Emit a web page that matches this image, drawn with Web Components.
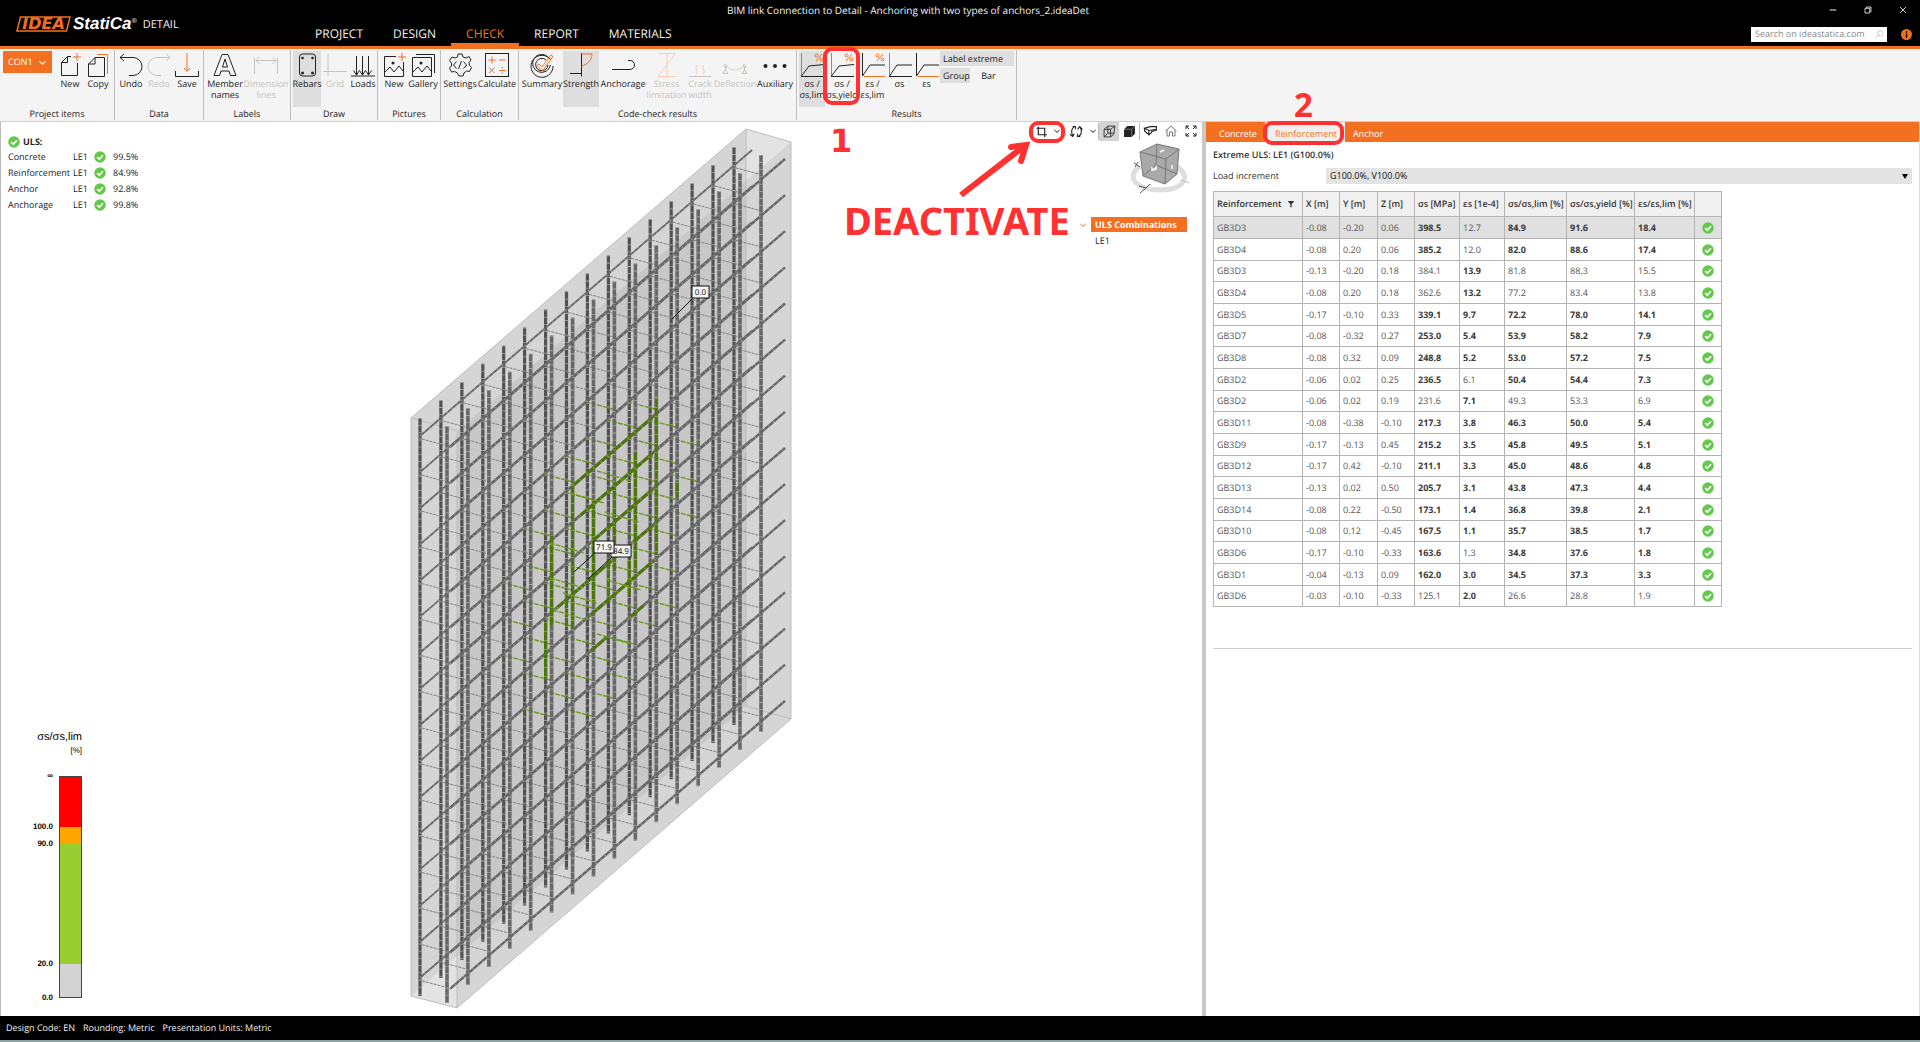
<!DOCTYPE html>
<html lang="en">
<head>
<meta charset="utf-8">
<title>IDEA StatiCa Detail</title>
<style>
  html, body { height: 100%; }
  body {
    margin: 0; position: relative; overflow: hidden;
    display: flex; flex-direction: column;
    font: 9px/12px "Open Sans", "Noto Sans", sans-serif;
    text-rendering: geometricPrecision;
    color: #222; background: #fff;
    --accent: #f37021; --mark: #ff3131;
  }
</style>
</head>
<body>
<app-header></app-header>
<ribbon-bar></ribbon-bar>
<work-space>
  <model-view slot="model"></model-view>
  <results-panel slot="results"></results-panel>
</work-space>
<status-bar></status-bar>
<callout-layer></callout-layer>

<script>
const ICONS = {
  newdoc: '<path d="M13 3.5H9.500L3.500 9.500V22.500H19.500V10"/><path d="M9.500 3.500V9.500H3.500"/><path class="o" d="M19 0v8M15 4h8"/>',
  copy: '<path d="M9 4.500H18.500V23.500H2.500V11z"/><path d="M9 4.500V11H2.500"/><path class="o" d="M11 1.500H21.500V21"/>',
  undo: '<path d="M1 4.500H14a9 9 0 0 1 0 18H10M5 1L1 4.500L5 8"/>',
  redo: '<path d="M23 4.500H10a9 9 0 0 0 0 18H14M19 1L23 4.500L19 8"/>',
  save: '<path d="M.5 18v5.500H23.500V18"/><path class="o" d="M12 0v18M9 15l3 3.500l3-3.500"/>',
  names: '<path d="M9 1.500H15L23 22.500H17.500L16 18H8L6.500 22.500H1z M12 6L9.500 14H14.500z"/>',
  dims: '<path d="M.5 5v16M23.500 5v16M2 7.500H22M5.500 4L2 7.500L5.500 11M18.500 4L22 7.500L18.500 11"/>',
  rebars: '<rect x="4.500" y="1" width="16" height="22" rx="3"/><g class="f"><circle cx="7.500" cy="5" r="1.300"/><circle cx="17.500" cy="5" r="1.300"/><circle cx="7.500" cy="20" r="1.500"/><circle cx="17.500" cy="20" r="1.500"/></g>',
  grid: '<path d="M5 1v22M0 18.500H24"/>',
  loads: '<path d="M0 23H24M5.500 3v19M11.500 3v19M17.500 3v19M2.500 17.500l3 4.500l3-4.500l3 4.500l3-4.500l3 4.500l3-4.500"/>',
  picture: '<path d="M14 3.500H2.500V23.500H21.500V9"/><path d="M3 19l5-5l4 5l5-6l4 5"/><circle class="f" cx="11" cy="10" r="1.500"/><path class="o" d="M20 0v8M16 4h8"/>',
  gallery: '<path d="M5 1.500H23.500V20"/><path d="M1.500 4.500H20.500V23.500H1.500z M2 19l5-5l4 5l5-6l4 5"/><circle class="f" cx="10" cy="10" r="1.500"/>',
  settings: '<path d="M10 1h4l1 3l3 1l3-1.500l2 3.500l-2 2.500l.5 3l2 2l-2 4l-3-.5l-2.500 2l-1 3h-4l-1.500-3l-3-1.500l-3 .5l-2-4l2-2l0-3l-2-2.500l2.500-3.500l3 1l2.500-1z"/><path d="M8.500 8.500L5.500 12l3 3.500M15.500 8.500l3 3.500l-3 3.500M13.500 8l-3 8"/>',
  calculate: '<rect x=".5" y=".5" width="23" height="23"/><path class="o" d="M3.500 7h7M7 3.500v7M14 7h6.500M4 14.500l5.500 5.500M9.500 14.500L4 20M14 17.500h6.500M17.200 14v1.500M17.200 19.500v1.500"/>',
  summary: '<path d="M21 7a11 11 0 1 0 2 6M18 4a9 9 0 1 0 2.500 8M16 7a6.200 6.200 0 1 0 2 5"/><path class="o" d="M7 12.500l2-1.500l3 3l9-12l2 1.500L12.500 18z"/>',
  strength: '<path d="M12.500 0V23.500M1 20.500H12.500"/><path class="o" d="M12.500 1H23C23 7 18 12 12.500 13"/>',
  anchorage: '<path d="M1 16.500H19a4.500 4.500 0 0 0 0-9H17"/>',
  stress: '<path class="o" d="M3 .500H20.500L3 23.500H20.500M12 0V24"/>',
  crack: '<path d="M1 23.500H23"/><path class="o" d="M9 12c-3 3 2 5-1 10M16 12c-3 3 2 5-1 10"/>',
  deflection: '<path d="M2.500 13v4L0 20.500H5L2.500 17M21.500 13v4L19 20.500H24L21.500 17"/><circle cx="2.500" cy="13" r="1.500"/><circle cx="21.500" cy="13" r="1.500"/><path class="o" d="M4 14q8 6 16 0"/>',
  dots: '<g class="f"><circle cx="2.500" cy="13" r="2"/><circle cx="12" cy="13" r="2"/><circle cx="21.500" cy="13" r="2"/></g>',
  sigpct: '<path class="o" d="M1.500 0V23"/><path d="M1 23.500H24M1.500 23L9 13L24 11.500"/><path class="o" d="M22 1l-6 7"/><circle class="o" cx="16.500" cy="2.500" r="1.500"/><circle class="o" cx="21.500" cy="6.500" r="1.500"/>',
  epspct: '<path d="M1.500 0V23M1.500 23L9 12H24"/><path class="o" d="M3 23.500H24M22 1l-6 7"/><circle class="o" cx="16.500" cy="2.500" r="1.500"/><circle class="o" cx="21.500" cy="6.500" r="1.500"/>',
  sigma: '<path class="o" d="M1.500 0V23"/><path d="M1 23.500H24M1.500 23L9 12H24"/>',
  epsilon: '<path d="M1.500 0V23M1.500 23L9 12H24"/><path class="o" d="M3 23.500H24"/>',
  chevron: '<path d="M4 9l8 7l8-7" stroke-width="3"/>',
  check: '<circle cx="12" cy="12" r="11.500" fill="#62c94a" stroke="none"/><path d="M6.500 12l4 4.500l7.500-8" stroke="#fff" stroke-width="3.600"/>',
  search: '<circle cx="14" cy="9" r="7"/><path d="M9 14L2 22"/>',
  info: '<circle cx="12" cy="12" r="12" fill="#f37021" stroke="none"/><path d="M12 10v9M12 5v3" stroke="#000" stroke-width="3"/>',
  minimize: '<path d="M2 12H22" stroke-width="3"/>',
  restore: '<path d="M3 7H17V21H3zM7 6V3H21V17H18" stroke-width="2.500"/>',
  close: '<path d="M3 3L21 21M21 3L3 21" stroke-width="2.500"/>',
  crop: '<path d="M1 5H19V24M5 1V19H24" stroke-width="2.500"/>',
  rotate: '<path d="M8 3C2 6 2 14 5 20M0 17l5 4l3-5M5 3h5v5M16 21c6-3 6-11 3-17M14 8l4-5l5 5M14 16v5h5" stroke-width="2"/>',
  wirecube: '<path d="M2 8L9 2H22L20 17L14 22H2zM2 8H14V22M14 8L22 2M9 2V15H20M9 15L2 22" stroke-width="1.500"/>',
  solidcube: '<path class="f" d="M2 8L8 2H22V16L16 22H2z"/><path d="M2 8H16V22M16 8L22 2" stroke="#aaa" stroke-width="1"/>',
  beam: '<path d="M1 6L9 10L23 8V3L12 3zM1 6V11L9 18V10M9 18L14 14V12L23 10V8" stroke-width="2"/>',
  home: '<path d="M1 12L12 2L23 12M4 10V22H9V14H15V22H20V10" stroke="#777" stroke-width="2"/>',
  expand: '<path d="M2 8V2H8M2 2L8 8M16 2H22V8M22 2L16 8M2 16V22H8M2 22L8 16M22 16V22H16M22 22L16 16" stroke-width="2"/>',
  filter: '<path class="f" d="M2 3H22L14 13V22H10V13z"/>'
};

class Base extends HTMLElement {
  connectedCallback() {
    if (this.shadowRoot) return;
    this.attachShadow({ mode: 'open' }).innerHTML = this.view();
  }
}

customElements.define('app-icon', class extends Base {
  view() {
    const s = this.getAttribute('size') || 24;
    return `<style>:host{display:inline-flex;flex:none}svg{display:block;overflow:visible;fill:none;stroke:currentColor;stroke-width:1}
      .o{stroke:var(--accent)}.f{fill:currentColor;stroke:none}</style>
      <svg width="${s}" height="${s}" viewBox="0 0 24 24" aria-hidden="true">${ICONS[this.getAttribute('name')]}</svg>`;
  }
});

customElements.define('app-header', class extends Base {
  view() {
    const tabs = ['PROJECT', 'DESIGN', 'CHECK', 'REPORT', 'MATERIALS'];
    return `<style>
      :host{display:grid;grid-template-columns:300px 1fr auto;grid-template-rows:20px 26px;background:#000;color:#f2f2f2;border-bottom:3px solid var(--accent)}
      .brand{grid-column:1;grid-row:1/3;display:flex;align-items:center;padding:1px 0 0 16px}
      .mark{position:relative;display:flex;width:55px;height:16px;align-items:center;justify-content:center;color:var(--accent);font:italic bold 16px/16px "DejaVu Sans",sans-serif}
      .mark svg{position:absolute;left:0;top:0;overflow:visible}
      .name{font:italic bold 17px/18px "Liberation Sans",sans-serif;color:#fff;padding-left:2px}
      sup{font-size:7px;line-height:7px;vertical-align:6px;font-weight:normal}
      .prod{font-size:11px;padding:3px 0 0 6px}
      .title{grid-column:1/4;grid-row:1;text-align:center;align-self:center;padding:0 104px 0 0;font-size:10px}
      .brand,.win{z-index:1}
      nav{grid-column:2;grid-row:2;display:flex}
      nav a{color:inherit;text-decoration:none;font-size:12px;line-height:28px;height:26px;padding:0 15px}
      nav a.on{color:var(--accent);box-shadow:inset 0 -3px var(--accent)}
      .win{grid-column:3;grid-row:1;display:flex;gap:24px;align-items:center;justify-content:flex-end;padding-right:12px}
      button{all:unset;display:flex;width:11px;justify-content:center}
      .tools{grid-column:3;grid-row:2;display:flex;align-items:center;gap:14px;padding:2px 8px 0 0}
      .search{display:flex;align-items:center;background:#fff;color:#777;width:136px;height:15px;padding:0 3px 0 4px;box-sizing:border-box}
      input{all:unset;flex:1;min-width:0;font-size:9px;line-height:14px}
      input::-webkit-search-cancel-button,input::-webkit-search-decoration{display:none}
      input::placeholder{color:#888;opacity:1}
    </style>
    <div class="brand"><span class="mark"><svg width="55" height="16" viewBox="0 0 55 16"><path d="M4.500 1H54L50.500 15H1z" fill="none" stroke="#f37021" stroke-width="1.500"/></svg>IDEA</span>
      <span class="name">StatiCa<sup>®</sup></span><span class="prod">DETAIL</span></div>
    <div class="title">BIM link Connection to Detail - Anchoring with two types of anchors_2.ideaDet</div>
    <nav>${tabs.map(t => `<a href="#"${t === 'CHECK' ? ' class="on"' : ''}>${t}</a>`).join('')}</nav>
    <div class="win">${['minimize', 'restore', 'close'].map(n => `<button aria-label="${n}"><app-icon name="${n}" size="8"></app-icon></button>`).join('')}</div>
    <div class="tools"><label class="search"><input type="text" aria-label="Search" placeholder="Search on ideastatica.com"><app-icon name="search" size="9"></app-icon></label>
      <button aria-label="About"><app-icon name="info" size="11"></app-icon></button></div>`;
  }
});

customElements.define('ribbon-group', class extends Base {
  view() {
    return `<style>
      :host{display:flex;flex-direction:column;box-sizing:border-box;flex:none;border-right:1px solid #bdbdbd;margin:1px 0}
      .row{display:flex;flex:1;padding:1px 2px 0}
      .cap{text-align:center;line-height:12px}
    </style><div class="row"><slot></slot></div><div class="cap">${this.getAttribute('caption')}</div>`;
  }
});

customElements.define('ribbon-button', class extends Base {
  view() {
    const off = this.hasAttribute('off');
    return `<style>
      :host{display:block;flex:none}
      button{all:unset;box-sizing:border-box;width:100%;height:56px;display:flex;flex-direction:column;align-items:center;gap:1px;padding-top:2px;
        white-space:nowrap;text-align:center;line-height:11px;${off ? 'color:#c4c4c4;--accent:#f8cdb2;' : ''}${this.hasAttribute('on') ? 'background:#dedede;' : ''}}
    </style><button${off ? ' aria-disabled="true"' : ''}><app-icon name="${this.getAttribute('icon')}" size="24"></app-icon><span><slot></slot></span></button>`;
  }
});

customElements.define('ribbon-bar', class extends Base {
  view() {
    const groups = [
      ['Project items', 115, [['newdoc', 28, 'New'], ['copy', 28, 'Copy']]],
      ['Data', 89, [['undo', 28, 'Undo'], ['redo', 28, 'Redo', 'off'], ['save', 28, 'Save']]],
      ['Labels', 87, [['names', 38, 'Member<br>names'], ['dims', 44, 'Dimension<br>lines', 'off']]],
      ['Draw', 87, [['rebars', 28, 'Rebars', 'on'], ['grid', 28, 'Grid', 'off'], ['loads', 28, 'Loads']]],
      ['Pictures', 63, [['picture', 28, 'New'], ['gallery', 30, 'Gallery']]],
      ['Calculation', 78, [['settings', 34, 'Settings'], ['calculate', 40, 'Calculate']]],
      ['Code-check results', 278, [['summary', 42, 'Summary'], ['strength', 36, 'Strength', 'on'], ['anchorage', 48, 'Anchorage'], ['stress', 39, 'Stress<br>limitation', 'off'],
        ['crack', 28, 'Crack<br>width', 'off'], ['deflection', 42, 'Deflection', 'off'], ['dots', 38, 'Auxiliary']]],
      ['Results', 220, [['sigpct', 26, 'σs /<br>σs,lim', 'on'], ['sigpct', 34, 'σs /<br>σs,yield'], ['epspct', 27, 'εs /<br>εs,lim'], ['sigma', 27, 'σs'], ['epsilon', 27, 'εs']]]
    ];
    const btn = ([i, w, t, s]) => `<ribbon-button icon="${i}" style="width:${w}px"${s ? ' ' + s : ''}>${t}</ribbon-button>`;
    return `<style>
      :host{display:flex;height:72px;background:#f4f4f4;border-bottom:1px solid #cfcfcf}
      .con{all:unset;box-sizing:border-box;display:flex;align-items:center;justify-content:space-between;width:50px;height:22px;margin:0 4px 0 1px;padding:0 5px;background:var(--accent);color:#fff}
      .opts{display:grid;grid-template-columns:30px 1fr;gap:2px 0;align-content:start;flex:1}
      .opts button{all:unset;line-height:15px;padding:0 3px}
      .opts .wide{grid-column:1/3}.opts .on{background:#dedede}.opts .bar{text-align:center;padding-right:10px}
    </style>${groups.map(([c, w, b]) => `<ribbon-group caption="${c}" style="width:${w}px">${c === 'Project items' ? '<button class="con">CON1<app-icon name="chevron" size="9"></app-icon></button>' : ''}${b.map(btn).join('')}${c === 'Results' ? '<div class="opts"><button class="wide on">Label extreme</button><button class="on">Group</button><button class="bar">Bar</button></div>' : ''}</ribbon-group>`).join('')}`;
  }
});

customElements.define('work-space', class extends Base {
  view() {
    return `<style>:host{display:grid;grid-template-columns:1202fr 4px 714fr;flex:1;min-height:0}
      .split{background:#c9c9c9}</style><slot name="model"></slot><div class="split"></div><slot name="results"></slot>`;
  }
});

customElements.define('check-summary', class extends Base {
  view() {
    const rows = [['Concrete', '99.5%'], ['Reinforcement', '84.9%'], ['Anchor', '92.8%'], ['Anchorage', '99.8%']];
    return `<style>:host{display:block;position:absolute;left:7px;top:12px}
      .t{display:flex;align-items:center;gap:3px;font-weight:bold;line-height:15px}
      dl{display:grid;grid-template-columns:65px 21px 19px auto;align-items:center;margin:0;line-height:16px}dd{margin:0}dd app-icon{display:flex}</style>
      <div class="t"><app-icon name="check" size="12"></app-icon>ULS:</div>
      <dl>${rows.map(r => `<dt>${r[0]}</dt><dd>LE1</dd><dd><app-icon name="check" size="12"></app-icon></dd><dd>${r[1]}</dd>`).join('')}</dl>`;
  }
});

customElements.define('color-legend', class extends Base {
  view() {
    const seg = [['∞', '#f00', 51], ['100.0', '#ffa500', 17], ['90.0', '#9acd32', 120], ['20.0', '#d3d3d3', 34]];
    return `<style>:host{display:block;position:absolute;left:23px;bottom:18px;width:58px;font:8px/8px "Liberation Sans",sans-serif;color:#000;text-align:right}
      h4{margin:0;font-weight:normal;font-size:11px;line-height:14px;white-space:nowrap}
      .u{margin:3px 0 21px}
      .s{display:flex;justify-content:space-between}.s b,.end b{width:29px;margin-top:-4px}
      .s i{width:21px;border:solid #444;border-width:0 1px}
      .s:nth-of-type(2) i{border-top-width:1px}.s.last i{border-bottom-width:1px}
      .end{display:flex;height:0}</style>
      <h4>σs/σs,lim</h4><div class="u">[%]</div>
      ${seg.map(([l, c, h], n) => `<div class="s${n === 3 ? ' last' : ''}" style="height:${h}px"><b>${l}</b><i style="background:${c}"></i></div>`).join('')}
      <div class="end"><b>0.0</b></div>`;
  }
});

function drawModel() {
  const out = [], ln = (x1, y1, x2, y2, c) => out.push(`<path class="${c}" d="M${x1.toFixed(1)} ${y1.toFixed(1)}L${x2.toFixed(1)} ${y2.toFixed(1)}"/>`);
  const bar = (x1, y1, x2, y2, k) => { ln(x1, y1, x2, y2, k); ln(x1, y1, x2, y2, k[0] + 't'); };
  const dx = 20.93, dy = 18.07, row = 36.12;
  out.push('<path d="M411 418L746 129L791 142V719L457 1008L411 996z" fill="#e3e3e3"/>');
  out.push('<path class="face" d="M411 418L746 129V706L411 996z"/><path class="face" d="M457 431L791 142V719L457 1008z"/>');
  out.push('<path class="edge" d="M411 418L746 129L791 142V719L457 1008L411 996zM411 418L457 431M746 129V706L791 719M457 431V1008"/>');
  for (let i = 0; i < 16; i++) bar(420 + dx * i, 418 - dy * i, 420 + dx * i, 996 - dy * i, 'vb');
  for (let k = 0; k < 16; k++) bar(420, 436 + row * k, 752, 150 + row * k, 'db');
  for (let i = 0; i < 16; i++) for (let k = 0; k < 16; k++) {
    const x = 418 + dx * i, y = 438 + row * k - dy * i, u = (x + 14 - 600) / 92, v = (y + 4 + .866 * (x + 14) - 1075) / 152;
    ln(x, y, x + 30, y + 8, u * u + v * v < 1 ? 'tg' : 'tb');
  }
  for (let i = 0; i < 16; i++) bar(447 + dx * i, 426 - dy * i, 447 + dx * i, 1003 - dy * i, 'vf');
  for (let k = 0; k < 16; k++) bar(450, 447 + row * k, 785, 159 + row * k, 'df');
  [[10, 398, 555], [9, 451, 570], [8, 481, 572], [7, 500, 603], [6, 485, 630], [5, 535, 625], [11, 482, 497]].forEach(([i, a, b]) => bar(447 + dx * i, a, 447 + dx * i, b, 'gv'));
  [[6, 622, 680], [7, 590, 627], [9, 560, 600], [10, 560, 595]].forEach(([i, a, b]) => bar(420 + dx * i, a, 420 + dx * i, b, 'gv'));
  [[4, 573, 652], [5, 580, 652], [6, 593, 652], [7, 557, 613], [7, 633, 653], [8, 590, 653], [9, 590, 607], [9, 630, 643]].forEach(([k, a, b]) =>
    bar(a, 447 + row * k - (a - 450) * .86, b, 447 + row * k - (b - 450) * .86, 'gv'));
  [[597, 471], [570, 493], [605, 512], [550, 543], [550, 578], [563, 593], [607, 580], [553, 610], [597, 634]].forEach(([x, y]) => ln(x, y, x + 34, y + 10, 'tg'));
  out.push('<path d="M692 299L672 319M596 552L574 572M612 557L588 579" stroke="#111" stroke-width="1"/>');
  [[692, 286, 17, '0.0'], [611, 545, 20, '84.9'], [594, 541, 20, '71.9']].forEach(([x, y, w, t]) =>
    out.push(`<rect x="${x}" y="${y}" width="${w}" height="12" fill="#f6f6f6" stroke="#111"/><text x="${x + w / 2}" y="${y + 9}">${t}</text>`));
  return out.join('');
}

customElements.define('orientation-cube', class extends Base {
  view() {
    return `<style>:host{display:block;position:absolute;right:12px;top:20px}svg{display:block}</style>
    <svg width="60" height="52" viewBox="0 0 60 52" fill="none" stroke="#777" stroke-width="1" role="img" aria-label="View orientation">
      <path d="M10 24C-6 36 8 48 30 48C54 48 62 34 47 25" stroke="#dedede" stroke-width="5"/>
      <path d="M10 10L27 2L49 7L47 32L35 42L13 34z" fill="#a9a9a9"/><path d="M10 10L36 17L49 7M36 17L35 42M27 2L26 23L13 34M26 23L47 32"/>
      <path d="M30 10l4-2M22 29v-3l2 2l2-3v3M42 23v4" stroke="#f4f4f4" stroke-width="1.500"/>
      <path d="M4 21l6 4M8 20l-3 5M9 44l7 2l4-4M16 46l-6 5" stroke="#555"/><path d="M51 38l8 3" stroke="#bbb"/></svg>`;
  }
});

customElements.define('view-toolbar', class extends Base {
  view() {
    const b = (n, s, w, c = '') => `<button class="${c}" aria-label="${n}" style="width:${w}px"><app-icon name="${n}" size="${s}"></app-icon></button>`;
    return `<style>:host{display:flex;align-items:center;position:absolute;right:1px;top:-1px;height:20px;color:#222}
      button{all:unset;display:flex;align-items:center;justify-content:center;height:20px}.on{background:#d4d4d4}
      i{width:1px;height:17px;background:#bbb}</style>
      ${b('crop', 11, 18)}${b('chevron', 8, 14)}${b('rotate', 13, 24)}${b('chevron', 8, 10)}<i></i>${b('wirecube', 13, 20, 'on')}${b('solidcube', 13, 20)}<i></i>${b('beam', 13, 21)}${b('home', 12, 20)}${b('expand', 12, 20)}`;
  }
});

customElements.define('combination-tree', class extends Base {
  view() {
    return `<style>:host{display:grid;grid-template-columns:12px 96px;align-items:center;position:absolute;right:15px;top:95px}
      .h{background:var(--accent);color:#fff;font-weight:bold;line-height:15px;padding-left:4px}.l{grid-column:2;padding-left:4px;line-height:18px}
      app-icon{color:var(--accent)}</style>
      <app-icon name="chevron" size="8"></app-icon><div class="h">ULS Combinations</div><div class="l">LE1</div>`;
  }
});

customElements.define('model-view', class extends Base {
  view() {
    return `<style>:host{display:block;position:relative;border-left:1px solid #bbb;box-sizing:border-box;background:#fff;min-width:0;min-height:0}
      .scene{position:absolute;inset:0;width:100%;height:100%;fill:none}
      .face{fill:#000;fill-opacity:.06}.edge{stroke:#bdbdbd;stroke-width:1}
      .vb{stroke:#525252;stroke-width:3.200}.vf{stroke:#686868;stroke-width:3.600}
      .db{stroke:#686868;stroke-width:1.800}.df{stroke:#666;stroke-width:2.400}
      .vt{stroke:#a8a8a8;stroke-width:3.600;stroke-dasharray:.8 6.400}.dt{stroke:#a0a0a0;stroke-width:1.600;stroke-dasharray:1 5}
      .tb{stroke:#808080;stroke-width:1;stroke-dasharray:3 1}.tg{stroke:#6d9a1c;stroke-width:1.400;stroke-dasharray:5 1}
      .gv{stroke:#4d7411;stroke-width:3}.gt{stroke:#79a52e;stroke-width:3;stroke-dasharray:1 8}
      text{font:8px "Noto Sans",sans-serif;fill:#111;text-anchor:middle}</style>
      <svg class="scene" viewBox="1 122 1201 894" preserveAspectRatio="xMinYMin meet" role="img" aria-label="Reinforcement model">${drawModel()}</svg>
      <check-summary></check-summary><color-legend></color-legend><view-toolbar></view-toolbar><orientation-cube></orientation-cube><combination-tree></combination-tree>`;
  }
});

customElements.define('results-panel', class extends Base {
  view() {
    const head = ['Reinforcement', 'X [m]', 'Y [m]', 'Z [m]', 'σs [MPa]', 'εs [1e-4]', 'σs/σs,lim [%]', 'σs/σs,yield [%]', 'εs/εs,lim [%]', ''];
    const cols = [89, 37, 38, 37, 45, 45, 62, 68, 60, 27];
    const data = `GB3D3 -0.08 -0.20 0.06 *398.5 12.7 *84.9 *91.6 *18.4
GB3D4 -0.08 0.20 0.06 *385.2 12.0 *82.0 *88.6 *17.4
GB3D3 -0.13 -0.20 0.18 384.1 *13.9 81.8 88.3 15.5
GB3D4 -0.08 0.20 0.18 362.6 *13.2 77.2 83.4 13.8
GB3D5 -0.17 -0.10 0.33 *339.1 *9.7 *72.2 *78.0 *14.1
GB3D7 -0.08 -0.32 0.27 *253.0 *5.4 *53.9 *58.2 *7.9
GB3D8 -0.08 0.32 0.09 *248.8 *5.2 *53.0 *57.2 *7.5
GB3D2 -0.06 0.02 0.25 *236.5 6.1 *50.4 *54.4 *7.3
GB3D2 -0.06 0.02 0.19 231.6 *7.1 49.3 53.3 6.9
GB3D11 -0.08 -0.38 -0.10 *217.3 *3.8 *46.3 *50.0 *5.4
GB3D9 -0.17 -0.13 0.45 *215.2 *3.5 *45.8 *49.5 *5.1
GB3D12 -0.17 0.42 -0.10 *211.1 *3.3 *45.0 *48.6 *4.8
GB3D13 -0.13 0.02 0.50 *205.7 *3.1 *43.8 *47.3 *4.4
GB3D14 -0.08 0.22 -0.50 *173.1 *1.4 *36.8 *39.8 *2.1
GB3D10 -0.08 0.12 -0.45 *167.5 *1.1 *35.7 *38.5 *1.7
GB3D6 -0.17 -0.10 -0.33 *163.6 1.3 *34.8 *37.6 *1.8
GB3D1 -0.04 -0.13 0.09 *162.0 *3.0 *34.5 *37.3 *3.3
GB3D6 -0.03 -0.10 -0.33 125.1 *2.0 26.6 28.8 1.9`.split('\n').map(r => r.trim().split(' '));
    const cell = v => v[0] === '*' ? `<td class="b">${v.slice(1)}</td>` : `<td>${v}</td>`;
    return `<style>
      :host{display:block;background:#fff;min-width:0;color:#333;border-right:1px solid #ddd;box-sizing:border-box}
      nav{display:flex;background:var(--accent);height:20px;padding-left:9px}
      nav a{color:#fff;text-decoration:none;line-height:24px;padding:0 8px 0 4px}
      nav a.on{color:var(--accent);background:#f0f0f0;padding:0 8px 0 10px}
      nav a.on + a{padding-left:8px}
      .body{padding:0 7px}
      h3{margin:7px 0;font-size:9px;font-weight:600;line-height:12px}
      .load{display:grid;grid-template-columns:113px 1fr;align-items:center;margin-bottom:7px}
      .pick{position:relative;display:flex;align-items:center}
      select{appearance:none;border:0;border-radius:0;background:#e3e3e3;font:inherit;color:#111;height:16px;width:100%;padding:0 4px}
      .pick::after{content:"";position:absolute;right:4px;border:3px solid transparent;border-top:5px solid #000;border-bottom:0}
      table{border-collapse:collapse;table-layout:fixed;width:508px;border:1px solid #a8a8a8}
      th,td{border:1px solid #b4b4b4;padding:0 0 0 3px;text-align:left;height:21px;white-space:nowrap;box-sizing:border-box;line-height:12px}
      th{background:#f0f0f0;height:25px;font-weight:600;font-size:9px}
      th div{display:flex;justify-content:space-between;padding-right:7px;align-items:center}
      tr{height:22px}tbody tr:nth-child(3n){height:21px}
      td{color:#555}td.b{font-weight:bold;color:#3a3a3a}tbody tr:first-child{background:#e0e0e0}
      td.c{padding:0}td.c app-icon{display:flex;justify-content:center}
      hr{border:0;border-top:1px solid #d0d0d0;margin:41px 0 0}
    </style>
    <nav><a href="#">Concrete</a><a href="#" class="on">Reinforcement</a><a href="#">Anchor</a></nav>
    <div class="body"><h3>Extreme ULS: LE1 (G100.0%)</h3>
    <div class="load"><label for="inc">Load increment</label><span class="pick"><select id="inc"><option>G100.0%, V100.0%</option></select></span></div>
    <table><colgroup>${cols.map(c => `<col style="width:${c}px">`).join('')}</colgroup>
    <thead><tr>${head.map((h, i) => `<th>${i ? h : `<div>${h}<app-icon name="filter" size="8"></app-icon></div>`}</th>`).join('')}</tr></thead>
    <tbody>${data.map(r => `<tr>${r.map(cell).join('')}<td class="c"><app-icon name="check" size="12"></app-icon></td></tr>`).join('')}</tbody></table><hr></div>`;
  }
});

customElements.define('status-bar', class extends Base {
  view() {
    return `<style>:host{display:flex;gap:8px;background:#000;color:#f2f2f2;line-height:24px;padding-left:6px;border-bottom:2px solid #8fa3a6}</style>
      <span>Design Code: EN</span><span>Rounding: Metric</span><span>Presentation Units: Metric</span>`;
  }
});

customElements.define('callout-layer', class extends Base {
  view() {
    return `<style>:host{position:absolute;inset:0;pointer-events:none;color:var(--mark);font:bold 38px/38px "Noto Sans",sans-serif}
      .box{position:absolute;box-sizing:border-box;border:4px solid var(--mark);border-radius:9px}
      span{position:absolute;line-height:38px}
      svg{position:absolute;left:950px;top:135px}</style>
      <div class="box" style="left:823px;top:47px;width:37px;height:58px"></div>
      <div class="box" style="left:1029px;top:121px;width:36px;height:22px"></div>
      <div class="box" style="left:1263px;top:121px;width:81px;height:24px"></div>
      <span style="left:830px;top:122px;font-family:'DejaVu Sans';font-size:32px">1</span>
      <span style="left:1294px;top:86px;font-size:33px">2</span>
      <span style="left:844px;top:202px">DEACTIVATE</span>
      <svg width="90" height="70" fill="none" stroke="#ff3131" stroke-width="6"><path d="M11 60L73 12"/><path d="M61 12L76 10L71 26" stroke-linecap="round"/></svg>`;
  }
});
</script>
</body>
</html>
